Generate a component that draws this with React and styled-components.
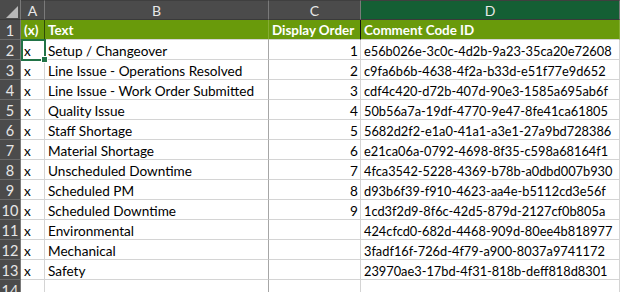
import React from 'react';
import styled, { createGlobalStyle } from 'styled-components';

const Global = createGlobalStyle`
  html, body { margin: 0; padding: 0; background: #ffffff; }
  body { font-family: Lato, "Liberation Sans", sans-serif; overflow: hidden; }
`;

const Sheet = styled.div`
  display: grid;
  grid-template-columns: 21px 24px 224px 92px 259px;
  grid-auto-rows: 20px;
  width: 620px;
  height: 292px;
  overflow: hidden;
  font-size: 13.6px;
  background: #ffffff;
`;

const Corner = styled.div`
  position: relative;
  background: #4b4b4b;
  border-right: 1px solid #7a7a7a;
  border-bottom: 1px solid #3a3a3a;
  box-sizing: border-box;
  &::after {
    content: '';
    position: absolute;
    left: 6px;
    top: 6px;
    width: 12px;
    height: 12px;
    background: #b8b8b8;
    clip-path: polygon(100% 0, 100% 100%, 0 100%);
  }
`;

const ColHeader = styled.div`
  box-sizing: border-box;
  background: ${(p) => (p.$active ? '#145f34' : '#4b4b4b')};
  color: #e8e8e8;
  text-align: center;
  font-size: 14px;
  border-right: 1px solid #7a7a7a;
  border-bottom: 1px solid #3a3a3a;
  border-top: 1px solid #3f3f3f;
  line-height: 18px;
  padding-top: 1px;
`;

const RowHeader = styled.div`
  box-sizing: border-box;
  background: #4b4b4b;
  color: #e6e6e6;
  text-align: center;
  font-size: 14.5px;
  line-height: 19px;
  padding-top: 1px;
  border-right: 1px solid #7a7a7a;
  border-bottom: 1px solid #6a6a6a;
`;

const TitleCell = styled.div`
  box-sizing: border-box;
  background: #699a0b;
  color: #ffffff;
  font-weight: 700;
  font-size: 13.4px;
  white-space: nowrap;
  overflow: hidden;
  padding: 1px 3px 0 3px;
  line-height: 18px;
  border-right: 1px solid ${(p) => p.$edge || '#86ad33'};
  border-bottom: 1px solid #d4d4d4;
`;

const Cell = styled.div`
  position: relative;
  box-sizing: border-box;
  color: #000000;
  white-space: nowrap;
  font-size: ${(p) => p.$size || '13.6px'};
  text-align: ${(p) => (p.$right ? 'right' : 'left')};
  padding: 2px ${(p) => (p.$right ? '2px' : '3px')} 0 3px;
  line-height: 18px;
  border-right: 1px solid ${(p) => p.$edge || '#d4d4d4'};
  border-bottom: 1px solid #d4d4d4;
  overflow: ${(p) => (p.$selected ? 'visible' : 'hidden')};
`;

const Selection = styled.div`
  position: absolute;
  left: 0;
  top: -1px;
  width: 25px;
  height: 22px;
  box-sizing: border-box;
  border: 2px solid #217346;
  pointer-events: none;
  z-index: 2;
`;

const Handle = styled.div`
  position: absolute;
  right: -4px;
  bottom: -4px;
  width: 5px;
  height: 5px;
  background: #217346;
  border: 1px solid #ffffff;
`;

const rows = [
  ['x', 'Setup / Changeover', '1', 'e56b026e-3c0c-4d2b-9a23-35ca20e72608'],
  ['x', 'Line Issue - Operations Resolved', '2', 'c9fa6b6b-4638-4f2a-b33d-e51f77e9d652'],
  ['x', 'Line Issue - Work Order Submitted', '3', 'cdf4c420-d72b-407d-90e3-1585a695ab6f'],
  ['x', 'Quality Issue', '4', '50b56a7a-19df-4770-9e47-8fe41ca61805'],
  ['x', 'Staff Shortage', '5', '5682d2f2-e1a0-41a1-a3e1-27a9bd728386'],
  ['x', 'Material Shortage', '6', 'e21ca06a-0792-4698-8f35-c598a68164f1'],
  ['x', 'Unscheduled Downtime', '7', '4fca3542-5228-4369-b78b-a0dbd007b930'],
  ['x', 'Scheduled PM', '8', 'd93b6f39-f910-4623-aa4e-b5112cd3e56f'],
  ['x', 'Scheduled Downtime', '9', '1cd3f2d9-8f6c-42d5-879d-2127cf0b805a'],
  ['x', 'Environmental', '', '424cfcd0-682d-4468-909d-80ee4b818977'],
  ['x', 'Mechanical', '', '3fadf16f-726d-4f79-a900-8037a9741172'],
  ['x', 'Safety', '', '23970ae3-17bd-4f31-818b-deff818d8301'],
  ['', '', '', ''],
];

export default function App() {
  return (
    <>
      <Global />
      <Sheet>
        <Corner />
        <ColHeader>A</ColHeader>
        <ColHeader>B</ColHeader>
        <ColHeader>C</ColHeader>
        <ColHeader $active>D</ColHeader>

        <RowHeader>1</RowHeader>
        <TitleCell $edge="#2e4a05">(x)</TitleCell>
        <TitleCell>Text</TitleCell>
        <TitleCell $edge="#111111">Display Order</TitleCell>
        <TitleCell>Comment Code ID</TitleCell>

        {rows.map((r, i) => (
          <React.Fragment key={i}>
            <RowHeader>{i + 2}</RowHeader>
            <Cell $selected={i === 0}>
              {r[0]}
              {i === 0 && (
                <Selection>
                  <Handle />
                </Selection>
              )}
            </Cell>
            <Cell $edge="#a6a6a6">{r[1]}</Cell>
            <Cell $right>{r[2]}</Cell>
            <Cell $size="12.8px">{r[3]}</Cell>
          </React.Fragment>
        ))}
      </Sheet>
    </>
  );
}
